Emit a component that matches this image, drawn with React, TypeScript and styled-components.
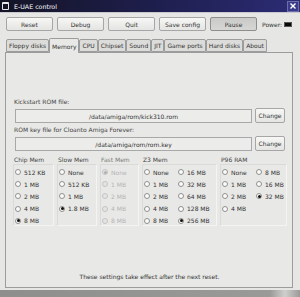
import React from "react";
import styled, { createGlobalStyle } from "styled-components";

const GlobalStyle = createGlobalStyle`
  html, body {
    margin: 0;
    padding: 0;
    background: #e6e6e4;
  }
  body {
    font-family: "DejaVu Sans", Verdana, sans-serif;
    font-size: 6px;
    color: #333;
  }
`;

const tabs = [
  "Floppy disks",
  "Memory",
  "CPU",
  "Chipset",
  "Sound",
  "JIT",
  "Game ports",
  "Hard disks",
  "About",
];

type Opt = { label: string; checked?: boolean };

const memGroups: { title: string; cols: Opt[][]; disabled?: boolean }[] = [
  {
    title: "Chip Mem",
    cols: [
      [
        { label: "512 KB" },
        { label: "1 MB" },
        { label: "2 MB" },
        { label: "4 MB" },
        { label: "8 MB", checked: true },
      ],
    ],
  },
  {
    title: "Slow Mem",
    cols: [
      [
        { label: "None" },
        { label: "512 KB" },
        { label: "1 MB" },
        { label: "1.8 MB", checked: true },
      ],
    ],
  },
  {
    title: "Fast Mem",
    disabled: true,
    cols: [
      [
        { label: "None", checked: true },
        { label: "1 MB" },
        { label: "2 MB" },
        { label: "4 MB" },
        { label: "8 MB" },
      ],
    ],
  },
  {
    title: "Z3 Mem",
    cols: [
      [
        { label: "None" },
        { label: "1 MB" },
        { label: "2 MB" },
        { label: "4 MB" },
        { label: "8 MB" },
      ],
      [
        { label: "16 MB" },
        { label: "32 MB" },
        { label: "64 MB" },
        { label: "128 MB" },
        { label: "256 MB", checked: true },
      ],
    ],
  },
  {
    title: "P96 RAM",
    cols: [
      [{ label: "None" }, { label: "1 MB" }, { label: "2 MB" }, { label: "4 MB" }],
      [{ label: "8 MB" }, { label: "16 MB" }, { label: "32 MB", checked: true }],
    ],
  },
];

const App = () => {
  return (
    <>
      <GlobalStyle />
      <Window>
        <TitleBar>
          <WinIcon />
          <Title>E-UAE control</Title>
          <CloseBox>
            <svg width="8" height="8" viewBox="0 0 8 8">
              <path d="M1.5 1.5 L6.5 6.5 M6.5 1.5 L1.5 6.5" stroke="#fff" strokeWidth="1.4" />
            </svg>
          </CloseBox>
        </TitleBar>

        <Toolbar>
          <ToolButton>Reset</ToolButton>
          <ToolButton>Debug</ToolButton>
          <ToolButton>Quit</ToolButton>
          <ToolButton>Save config</ToolButton>
          <ToolButton $pressed>Pause</ToolButton>
          <Power>
            Power:
            <Led />
          </Power>
        </Toolbar>

        <Notebook>
          <TabRow>
            {tabs.map((t) => (
              <Tab key={t} $active={t === "Memory"}>
                {t}
              </Tab>
            ))}
          </TabRow>
          <Page>
            <FieldLabel>Kickstart ROM file:</FieldLabel>
            <FileRow>
              <Entry>/data/amiga/rom/kick310.rom</Entry>
              <SmallButton>Change</SmallButton>
            </FileRow>
            <FieldLabel>ROM key file for Cloanto Amiga Forever:</FieldLabel>
            <FileRow>
              <Entry>/data/amiga/rom/rom.key</Entry>
              <SmallButton>Change</SmallButton>
            </FileRow>

            <MemGrid>
              {memGroups.map((g) => (
                <MemGroup key={g.title}>
                  <GroupTitle $disabled={g.disabled}>{g.title}</GroupTitle>
                  <GroupFrame $cols={g.cols.length}>
                    {g.cols.map((col, ci) => (
                      <RadioCol key={ci}>
                        {col.map((o) => (
                          <RadioRow key={o.label} $disabled={g.disabled}>
                            <RadioDot $checked={o.checked} $disabled={g.disabled} />
                            {o.label}
                          </RadioRow>
                        ))}
                      </RadioCol>
                    ))}
                  </GroupFrame>
                </MemGroup>
              ))}
            </MemGrid>

            <Footer>These settings take effect after the next reset.</Footer>
          </Page>
        </Notebook>
        <BottomEdge />
      </Window>
    </>
  );
};

export default App;

const Window = styled.div`
  width: 300px;
  height: 297px;
  display: flex;
  flex-direction: column;
  background: #e6e6e4;
  overflow: hidden;
`;

const TitleBar = styled.div`
  height: 12px;
  display: flex;
  align-items: center;
  background: linear-gradient(to right, #141426 0%, #1e1e4c 50%, #2c2c76 100%);
  color: #fff;
  padding: 0 1px 0 2px;
  border-bottom: 1px solid #c8c8d0;
`;

const WinIcon = styled.div`
  width: 5px;
  height: 5px;
  border: 1px solid #e8e8e8;
  border-top-width: 2px;
  border-radius: 1px;
  margin-right: 5px;
`;

const Title = styled.span`
  font-size: 6.3px;
  flex: 1;
`;

const CloseBox = styled.div`
  width: 10px;
  height: 9px;
  display: flex;
  align-items: center;
  justify-content: center;
  border: 1px solid #6c6ca8;
  background: #3a3a8a;
`;

const Toolbar = styled.div`
  display: flex;
  align-items: center;
  gap: 4px;
  padding: 4px 0 0 6px;
  height: 14px;
`;

const ToolButton = styled.div<{ $pressed?: boolean }>`
  width: 45px;
  height: 12px;
  display: flex;
  align-items: center;
  justify-content: center;
  border: 1px solid ${(p) => (p.$pressed ? "#8e8e8e" : "#a6a6a6")};
  border-radius: 2px;
  background: ${(p) =>
    p.$pressed
      ? "linear-gradient(#cacac8, #d6d6d4)"
      : "linear-gradient(#f7f7f6, #e4e4e2)"};
`;

const Power = styled.div`
  display: flex;
  align-items: center;
  gap: 2px;
  margin-left: 1px;
`;

const Led = styled.div`
  width: 8px;
  height: 5px;
  background: #080808;
  border: 1px solid #555;
  box-sizing: border-box;
`;

const Notebook = styled.div`
  display: flex;
  flex-direction: column;
  margin: 7px 7px 0 5px;
  flex: 1;
`;

const TabRow = styled.div`
  display: flex;
  align-items: flex-end;
  height: 14px;
  padding-left: 1px;
  position: relative;
  z-index: 1;
`;

const Tab = styled.div<{ $active?: boolean }>`
  height: ${(p) => (p.$active ? "14px" : "11px")};
  padding: 0 2px;
  display: flex;
  align-items: center;
  border: 1px solid #9c9c9c;
  border-bottom: ${(p) => (p.$active ? "none" : "1px solid #9c9c9c")};
  border-radius: 2px 2px 0 0;
  background: ${(p) => (p.$active ? "#e8e8e6" : "#dcdcda")};
  margin-bottom: ${(p) => (p.$active ? "-1px" : "0")};
  white-space: nowrap;
`;

const Page = styled.div`
  flex: 1;
  display: flex;
  flex-direction: column;
  border: 1px solid #9c9c9c;
  background: #e8e8e6;
  padding: 45px 7px 6px 8px;
`;

const FieldLabel = styled.div`
  line-height: 8px;
  height: 8px;
  margin-bottom: 2px;
  color: #444;
`;

const FileRow = styled.div`
  display: flex;
  gap: 3px;
  height: 14px;
  margin: 0 0 4px 1px;
`;

const Entry = styled.div`
  flex: 1;
  height: 12px;
  margin-top: 1px;
  border: 1px solid #a8a8a8;
  background: #ececea;
  display: flex;
  align-items: center;
  justify-content: center;
`;

const SmallButton = styled.div`
  width: 28px;
  height: 13px;
  display: flex;
  align-items: center;
  justify-content: center;
  border: 1px solid #a6a6a6;
  border-radius: 2px;
  background: linear-gradient(#f7f7f6, #e4e4e2);
`;

const MemGrid = styled.div`
  display: grid;
  grid-template-columns: 41px 40px 39px 75px 67px;
  column-gap: 3px;
  margin: 2px 0 0 -1px;
`;

const MemGroup = styled.div`
  display: flex;
  flex-direction: column;
`;

const GroupTitle = styled.div<{ $disabled?: boolean }>`
  line-height: 8px;
  padding-left: 1px;
  color: ${(p) => (p.$disabled ? "#7a7a7a" : "#444")};
`;

const GroupFrame = styled.div<{ $cols: number }>`
  display: grid;
  grid-template-columns: ${(p) => (p.$cols > 1 ? "34px 1fr" : "1fr")};
  height: 62px;
  box-sizing: border-box;
  border: 1px solid #dadad8;
  border-right-color: #f4f4f2;
  border-bottom-color: #f4f4f2;
  padding: 1px 0 0 1px;
`;

const RadioCol = styled.div`
  display: flex;
  flex-direction: column;
`;

const RadioRow = styled.div<{ $disabled?: boolean }>`
  height: 12.2px;
  display: flex;
  align-items: center;
  gap: 3px;
  color: ${(p) => (p.$disabled ? "#b4b4b4" : "#333")};
  white-space: nowrap;
`;

const RadioDot = styled.span<{ $checked?: boolean; $disabled?: boolean }>`
  width: 6px;
  height: 6px;
  box-sizing: border-box;
  border-radius: 50%;
  border: 1px solid ${(p) => (p.$disabled ? "#c4c4c4" : "#909090")};
  background: ${(p) => (p.$disabled ? "#e4e4e2" : "#fbfbfa")};
  display: flex;
  align-items: center;
  justify-content: center;

  &::after {
    content: "";
    width: 3px;
    height: 3px;
    border-radius: 50%;
    background: ${(p) =>
      p.$checked ? (p.$disabled ? "#b0b0b0" : "#111") : "transparent"};
  }
`;

const Footer = styled.div`
  margin-top: auto;
  line-height: 8px;
  text-align: center;
`;

const BottomEdge = styled.div`
  height: 7px;
  margin-top: 2px;
  background: linear-gradient(to right, #8e8e8c 0%, #9a9a98 90%, #cfcfcd 95%, #9a9a98 100%);
`;
